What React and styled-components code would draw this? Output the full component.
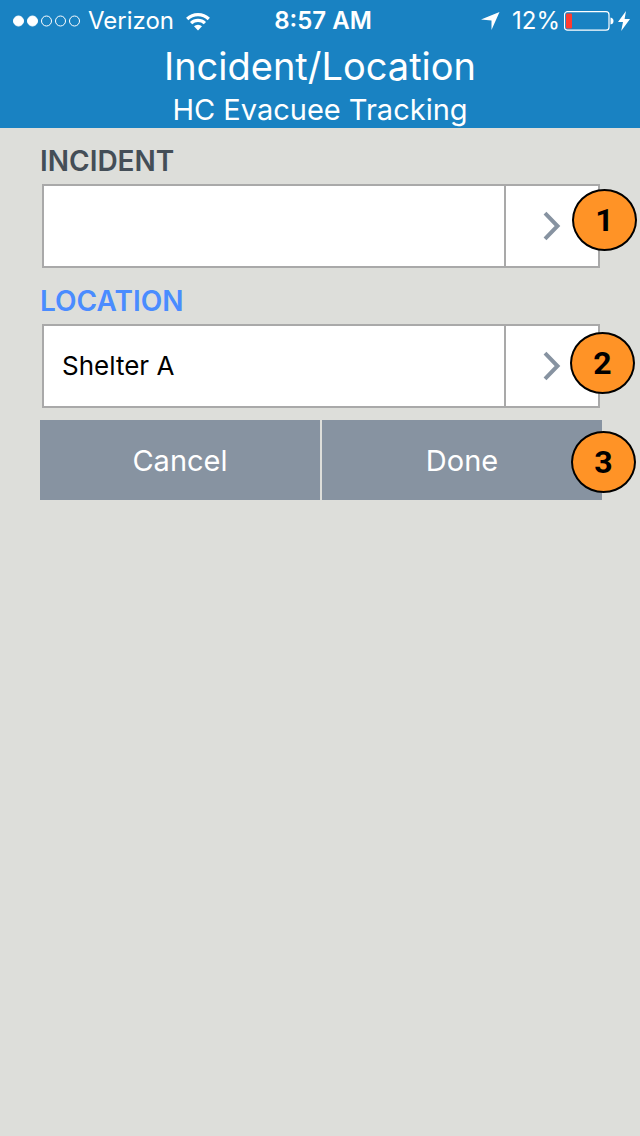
import React, { useState } from "react";
import styled, { createGlobalStyle } from "styled-components";

const GlobalStyle = createGlobalStyle`
  *, *::before, *::after { box-sizing: border-box; }
  body {
    margin: 0;
    background: #dddeda;
    font-family: Inter, "Liberation Sans", sans-serif;
  }
  h1, h2, p { margin: 0; font-weight: 400; }
`;

const Screen = styled.div`
  min-height: 100vh;
  background: #dddeda;
`;

const Header = styled.header`
  background: #1982c2;
  color: #fff;
  text-align: center;
`;

const StatusBar = styled.div`
  display: grid;
  grid-template-columns: 1fr auto 1fr;
  align-items: center;
  height: 40px;
  padding: 2px 10px 0 12px;
  font-size: 24px;
  line-height: 38px;
`;

const StatusGroup = styled.div`
  display: flex;
  align-items: center;
  justify-content: ${(p) => (p.$end ? "flex-end" : "flex-start")};
  gap: ${(p) => (p.$end ? 4 : 8)}px;

  svg { flex: none; }
`;

const Clock = styled.time`
  padding-left: 4px;
  font-weight: 600;
`;

const Carrier = styled.span`
  margin-right: 4px;
`;

const Charge = styled.span`
  margin-left: 8px;
`;

const Title = styled.h1`
  font-size: 38px;
  line-height: 52px;
`;

const Subtitle = styled.h2`
  font-size: 29px;
  line-height: 36px;
`;

const Form = styled.form`
  padding: 12px 38px 0 40px;
`;

const Label = styled.label`
  display: block;
  height: 44px;
  font-size: 28px;
  font-weight: 600;
  line-height: 42px;
  color: ${(p) => (p.$active ? "#4a8cff" : "#444e57")};
`;

const FieldBox = styled.div`
  position: relative;
  display: flex;
  height: 84px;
  margin: 0 2px 12px;
  border: 2px solid #a9a9a9;
  background: #fff;
`;

const TextInput = styled.input`
  flex: 1;
  min-width: 0;
  padding: 0 18px 2px;
  border: 0;
  border-radius: 0;
  background: transparent;
  color: #000;
  font: inherit;
  font-size: 26px;
  outline: none;
`;

const PickButton = styled.button`
  display: flex;
  align-items: center;
  justify-content: center;
  width: 94px;
  padding: 0;
  border: 0;
  border-left: 2px solid #a9a9a9;
  background: transparent;
`;

const Actions = styled.div`
  position: relative;
  display: grid;
  grid-template-columns: 1fr 1fr;
  gap: 2px;
`;

const ActionButton = styled.button`
  height: 80px;
  padding: 0;
  border: 0;
  background: #8793a1;
  color: #fff;
  font: inherit;
  font-size: 29px;
`;

const Badge = styled.span`
  position: absolute;
  top: ${(p) => p.$top}px;
  right: ${(p) => p.$right}px;
  display: flex;
  align-items: center;
  justify-content: center;
  width: 65px;
  height: 62px;
  border: 2px solid #000;
  border-radius: 50%;
  background: #ff9326;
  color: #000;
  font: bold 32px Roboto, "Liberation Sans", sans-serif;
`;

const SignalDots = () => (
  <svg width="68" height="12" viewBox="0 0 68 12" aria-hidden="true">
    {[0, 1, 2, 3, 4].map((i) => (
      <circle
        key={i}
        cx={6.5 + i * 14}
        cy="6"
        r="5"
        fill={i < 2 ? "#fff" : "none"}
        stroke="#fff"
        strokeWidth="1"
      />
    ))}
  </svg>
);

const WifiIcon = () => (
  <svg width="24" height="19" viewBox="0 0 24 19" aria-hidden="true">
    <g fill="none" stroke="#fff" strokeWidth="3.2">
      <path d="M1.2 7a15.3 15.3 0 0 1 21.6 0" />
      <path d="M5.1 11.2a9.8 9.8 0 0 1 13.8 0" />
    </g>
    <path d="M12 18.5l-4-4.2a5.8 5.8 0 0 1 8 0z" fill="#fff" />
  </svg>
);

const LocationIcon = () => (
  <svg width="19" height="18" viewBox="0 0 19 18" aria-hidden="true">
    <path d="M18.5 0L10.5 18V8.5L0 7.5z" fill="#fff" />
  </svg>
);

const BatteryIcon = () => (
  <svg width="50" height="20" viewBox="0 0 50 20" aria-hidden="true">
    <rect x="0.5" y="0.7" width="44.5" height="18.5" rx="3" fill="none" stroke="#fff" strokeWidth="1.2" />
    <rect x="2" y="2.5" width="6" height="15" rx="1" fill="#ff3b30" />
    <path d="M46.5 6.5q3 .5 3 3.5t-3 3.5z" fill="#fff" />
  </svg>
);

const BoltIcon = () => (
  <svg width="12" height="20" viewBox="0 0 12 20" aria-hidden="true">
    <path d="M8 0L0 11h5L3.2 20 12 8H6.6z" fill="#fff" />
  </svg>
);

const Chevron = () => (
  <svg width="18" height="30" viewBox="0 0 18 30" aria-hidden="true">
    <path d="M2 2.2L14.5 15 2 27.8" fill="none" stroke="#8793a1" strokeWidth="4" />
  </svg>
);

function Field({ id, label, active, initial, badge, badgeTop, badgeRight }) {
  const [value, setValue] = useState(initial);
  return (
    <>
      <Label htmlFor={id} $active={active}>{label}</Label>
      <FieldBox>
        <TextInput id={id} type="text" value={value} onChange={(e) => setValue(e.target.value)} />
        <PickButton type="button" aria-label={`Choose ${id}`}>
          <Chevron />
        </PickButton>
        <Badge $top={badgeTop} $right={badgeRight}>{badge}</Badge>
      </FieldBox>
    </>
  );
}

export default function App() {
  return (
    <>
      <GlobalStyle />
      <Screen>
        <Header>
          <StatusBar>
            <StatusGroup>
              <SignalDots />
              <Carrier>Verizon</Carrier>
              <WifiIcon />
            </StatusGroup>
            <Clock>8:57 AM</Clock>
            <StatusGroup $end>
              <LocationIcon />
              <Charge>12%</Charge>
              <BatteryIcon />
              <BoltIcon />
            </StatusGroup>
          </StatusBar>
          <Title>Incident/Location</Title>
          <Subtitle>HC Evacuee Tracking</Subtitle>
        </Header>
        <Form onSubmit={(e) => e.preventDefault()}>
          <Field id="incident" label="INCIDENT" initial="" badge="1" badgeTop={3} badgeRight={-39} />
          <Field id="location" label="LOCATION" active initial="Shelter A" badge="2" badgeTop={6} badgeRight={-37} />
          <Actions>
            <ActionButton type="button">Cancel</ActionButton>
            <ActionButton type="submit">Done</ActionButton>
            <Badge $top={11} $right={-34}>3</Badge>
          </Actions>
        </Form>
      </Screen>
    </>
  );
}
